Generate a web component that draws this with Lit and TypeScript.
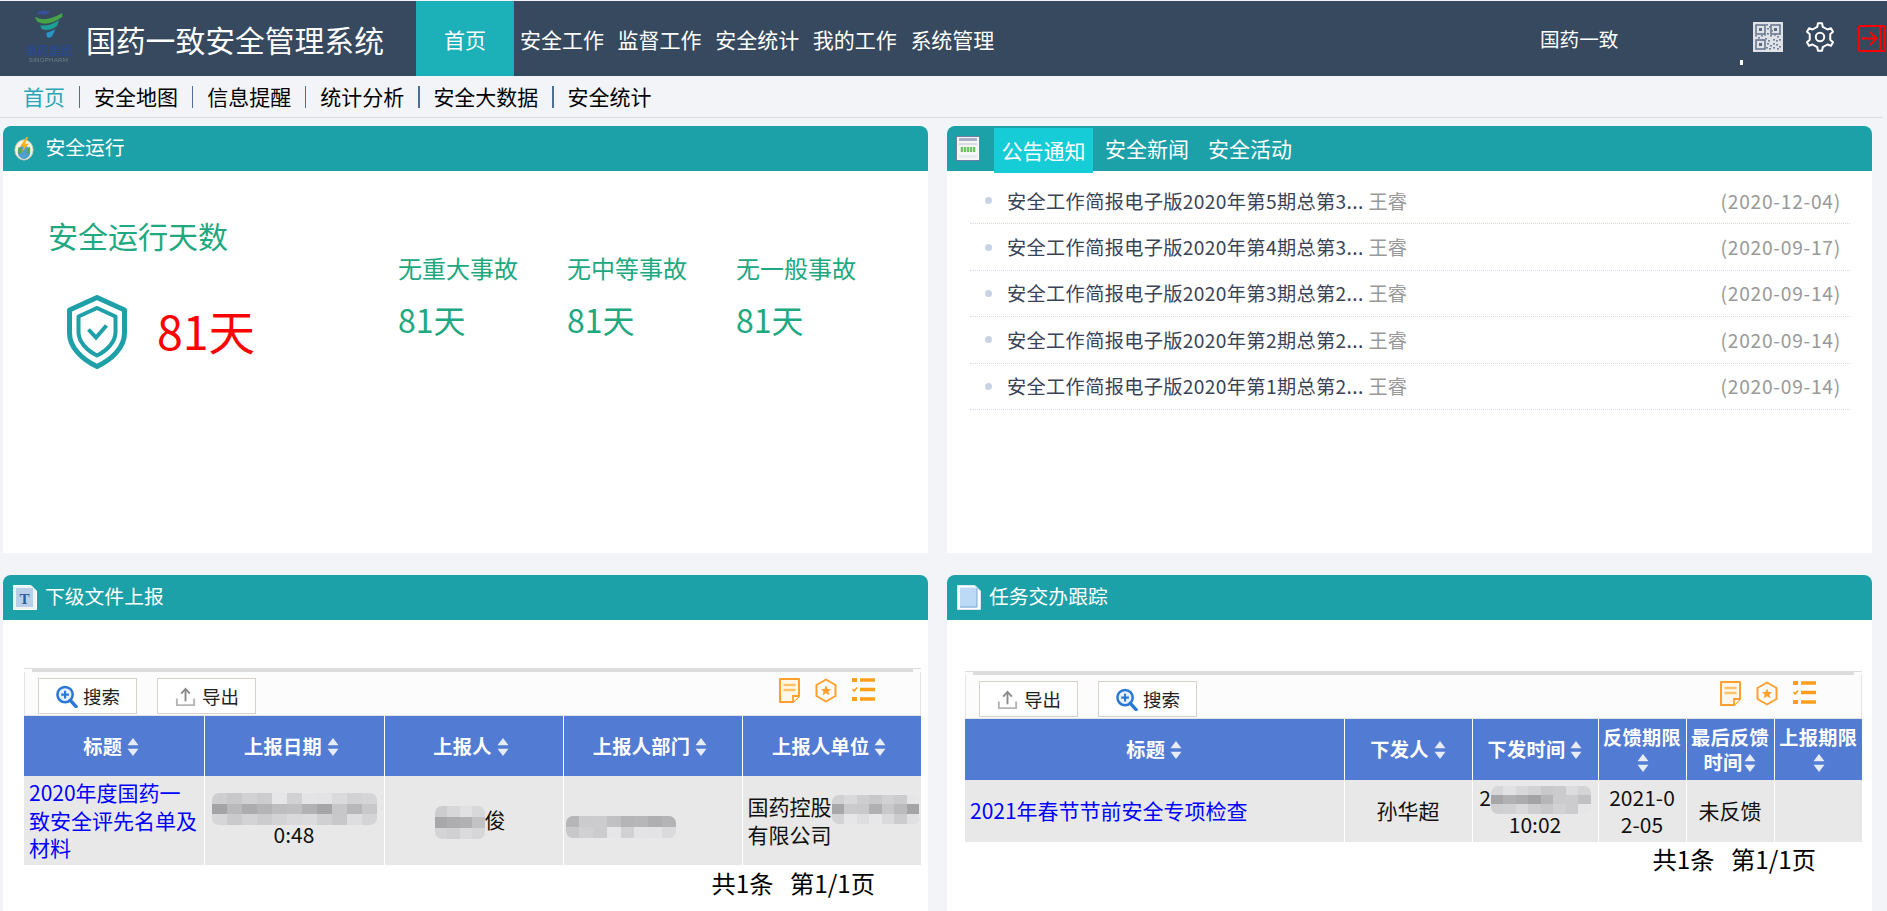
import { LitElement, html, css, svg } from "lit";
import { customElement } from "lit/decorators.js";

function gearPath(cx: number, cy: number, rOut: number, rIn: number, teeth: number) {
  const pts: string[] = [];
  const step = (Math.PI * 2) / teeth;
  for (let i = 0; i < teeth; i++) {
    const a = i * step - Math.PI / 2;
    const w = step * 0.2;
    const seq: [number, number][] = [
      [a - w * 1.25, rIn],
      [a - w * 0.7, rOut],
      [a + w * 0.7, rOut],
      [a + w * 1.25, rIn],
    ];
    for (const [an, r] of seq) {
      pts.push(`${(cx + Math.cos(an) * r).toFixed(2)} ${(cy + Math.sin(an) * r).toFixed(2)}`);
    }
  }
  return "M" + pts.join("L") + "Z";
}

function mosaic(w: number, h: number, cols: number, rows: number, seed: number) {
  const cells = [];
  let s = seed;
  for (let i = 0; i < cols * rows; i++) {
    s = (s * 73 + 41) % 101;
    const midRow = rows === 3 ? Math.floor(i / cols) === 1 : Math.floor(i / cols) === 0;
    const base = midRow ? 158 : 200;
    const v = base + (s % (midRow ? 48 : 32));
    cells.push(html`<i style="background:rgb(${v},${v},${v + 2})"></i>`);
  }
  return html`<span
    class="mosaic"
    style="width:${w}px;height:${h}px;grid-template-columns:repeat(${cols},1fr);grid-template-rows:repeat(${rows},1fr)"
    >${cells}</span
  >`;
}

const arrows = html`<svg class="sort" viewBox="0 0 12 20" width="12" height="20">
  <path d="M6 1 L11.5 8.2 H.5Z M6 19 L.5 11.8 H11.5Z" fill="#e6ecf8" />
</svg>`;

const searchIcon = html`<svg class="bi" viewBox="0 0 24 24" width="23" height="23">
  <circle cx="10.5" cy="10" r="8" fill="#e8f1fb" stroke="#2a78d6" stroke-width="2.6" />
  <path d="M16 16 L22 22.5" stroke="#2a78d6" stroke-width="3.6" stroke-linecap="round" />
  <path d="M6.5 10 H14.5 M10.5 6 V14" stroke="#2a78d6" stroke-width="2.2" />
</svg>`;

const exportIcon = html`<svg class="bi" viewBox="0 0 24 24" width="23" height="23">
  <path d="M3 14 V21 H21 V14" fill="none" stroke="#b5b5b5" stroke-width="2" />
  <path d="M12 17 V5" stroke="#8a8a8a" stroke-width="2" />
  <path d="M7.5 9 L12 4 L16.5 9" fill="none" stroke="#8a8a8a" stroke-width="2" />
</svg>`;

const orangeIcons = html`<div class="oicons">
  <svg viewBox="0 0 21 25" width="21" height="25">
    <path d="M1 1 H20 V18 L14 24 H1 Z" fill="#fff7ea" stroke="#ffa02e" stroke-width="2" stroke-linejoin="round" />
    <path d="M4.5 7 H16.5 M4.5 12 H16.5" stroke="#ffc26b" stroke-width="2.4" />
    <path d="M14 24 V18 H20" fill="#fff" stroke="#ffa02e" stroke-width="1.8" />
  </svg>
  <svg viewBox="0 0 22 25" width="22" height="25">
    <path d="M11 1.5 L20.5 7 V18 L11 23.5 L1.5 18 V7 Z" fill="none" stroke="#ffa02e" stroke-width="2" stroke-linejoin="round" />
    <path d="M11 7.5 L12.6 11 L16.2 11.3 L13.4 13.6 L14.4 17.2 L11 15.2 L7.6 17.2 L8.6 13.6 L5.8 11.3 L9.4 11 Z" fill="#ffa02e" />
  </svg>
  <svg viewBox="0 0 23 24" width="23" height="24">
    <path d="M0 0 H5 V4 H0Z M0 19 H5 V23 H0Z" fill="#ff9f1e" />
    <path d="M0.5 11 L2.2 13 L5 9.5" fill="none" stroke="#ff9f1e" stroke-width="1.6" />
    <path d="M8 2 H23 M8 11.5 H23 M8 21 H23" stroke="#ff9f1e" stroke-width="3.4" />
  </svg>
</div>`;

const iconSafe = html`<svg viewBox="0 0 22 26" width="22" height="25">
  <ellipse cx="11" cy="14.5" rx="9.5" ry="10.5" fill="#f6f4e2" stroke="#c8c8b0" />
  <ellipse cx="11" cy="17" rx="6.5" ry="7" fill="#4f9fd0" />
  <path d="M5 12 Q9 10 8 19 Q4 19 5 12Z M14 19 Q19 17 17 11 Q13 14 14 19Z" fill="#58a84a" />
  <path d="M13.5 1 L7 11 H11 L8.5 17 L16 8 H12 L15.5 1Z" fill="#f6b21a" />
</svg>`;
const iconCal = html`<svg viewBox="0 0 24 25" width="24" height="25">
  <rect x=".5" y=".5" width="23" height="24" fill="#f6f7f4" stroke="#6d7fa6" />
  <rect x="3" y="2" width="18" height="3" fill="#a7b0c6" />
  <rect x="3" y="7" width="18" height="2" fill="#d7dce3" />
  <rect x="4" y="11" width="16" height="5" fill="#d8eccf" />
  <path d="M6 11 V16 M9 11 V16 M12 11 V16 M15 11 V16 M18 11 V16" stroke="#49b23a" stroke-width="1.5" />
  <rect x="3" y="19" width="18" height="3" fill="#e7eaef" />
</svg>`;
const iconDoc = html`<svg viewBox="0 0 24 25" width="24" height="25">
  <path d="M.5 .5 H18 L23.5 6 V24.5 H.5Z" fill="#eef3fa" stroke="#fff" />
  <rect x="3" y="3" width="17" height="19" fill="#b9cfe8" />
  <text x="11.5" y="19" text-anchor="middle" font-size="15" font-weight="700" font-family="Liberation Serif" fill="#2c5e96">T</text>
</svg>`;
const iconBlank = html`<svg viewBox="0 0 24 25" width="24" height="25">
  <path d="M.5 .5 H18 L23.5 6 V24.5 H.5Z" fill="#fff" stroke="#dfe6ee" />
  <rect x="3" y="2.5" width="17" height="20" fill="#bcdaf6" />
  <path d="M20 3 V22 H3" fill="none" stroke="#7fa8d4" />
</svg>`;

const qrNoise: [number, number][] = [
  [13, 2], [16, 4], [14, 6], [18, 8], [2, 13], [5, 15], [8, 13], [11, 12], [14, 11], [17, 13], [21, 12], [24, 14], [26, 11],
  [4, 17], [9, 17], [12, 16], [15, 18], [20, 17], [23, 18], [26, 17], [14, 21], [17, 23], [20, 21], [23, 22], [26, 24], [13, 25], [16, 26], [20, 25], [24, 26],
];

const notices: [string, string][] = [
  ["安全工作简报电子版2020年第5期总第3...", "(2020-12-04)"],
  ["安全工作简报电子版2020年第4期总第3...", "(2020-09-17)"],
  ["安全工作简报电子版2020年第3期总第2...", "(2020-09-14)"],
  ["安全工作简报电子版2020年第2期总第2...", "(2020-09-14)"],
  ["安全工作简报电子版2020年第1期总第2...", "(2020-09-14)"],
];

@customElement("app-root")
export class AppRoot extends LitElement {
  static styles = css`
    :host {
      display: block;
      width: 1887px;
      height: 911px;
      overflow: hidden;
      background: #f2f4f8;
      font-family: "Noto Sans CJK SC", sans-serif;
      color: #000;
      padding-top: 1px;
    }
    * {
      box-sizing: border-box;
    }
    .top {
      height: 75px;
      background: #36495e;
      display: flex;
      align-items: center;
      color: #fff;
      position: relative;
    }
    .logo {
      width: 47px;
      margin-left: 25px;
      display: flex;
      flex-direction: column;
      align-items: center;
      margin-top: -4px;
      opacity: 0.9;
    }
    .logo svg {
      display: block;
      margin-bottom: 5px;
    }
    .logo-cn {
      font-size: 11.5px;
      line-height: 12px;
      color: #2b4a8f;
      font-weight: 700;
      white-space: nowrap;
    }
    .logo-en {
      font-size: 6.2px;
      line-height: 7px;
      color: #75838f;
      letter-spacing: 0.2px;
      white-space: nowrap;
      font-family: "Liberation Sans", sans-serif;
    }
    .brand {
      font-size: 29.8px;
      line-height: 40px;
      margin-left: 14px;
      width: 330px;
      white-space: nowrap;
    }
    .mnav {
      display: flex;
      align-items: center;
      height: 100%;
      font-size: 21px;
    }
    .mnav .act {
      width: 98px;
      height: 100%;
      background: #1cb0b9;
      display: flex;
      align-items: center;
      justify-content: center;
      margin-right: 6px;
    }
    .mnav span {
      margin-right: 13.6px;
      white-space: nowrap;
    }
    .uname {
      font-size: 19.6px;
      position: absolute;
      left: 1540px;
      top: 18px;
      line-height: 40px;
    }
    .tools {
      margin-left: auto;
      display: flex;
      align-items: center;
      height: 100%;
      position: relative;
    }
    .dot {
      position: absolute;
      width: 3px;
      height: 5px;
      background: #fff;
      left: -13px;
      top: 59px;
    }
    .tools svg {
      display: block;
    }
    .qr {
      margin-right: 22px;
      margin-top: -3px;
    }
    .gear {
      margin-right: 23px;
      margin-top: -3px;
    }
    .exit {
      margin-right: 1px;
    }
    .sub {
      height: 42px;
      border-bottom: 1px solid #dcdee4;
      margin-right: 4px;
      padding: 0 0 2px 23px;
      display: flex;
      align-items: center;
      font-size: 21px;
      line-height: 30px;
      white-space: nowrap;
    }
    .sub .on {
      color: #2aa7b5;
    }
    .sub i {
      width: 1.5px;
      height: 22px;
      background: #4d6f96;
      margin: 2px 13.8px 0;
    }
    .grid {
      display: grid;
      grid-template-columns: 925px 925px;
      column-gap: 19px;
      grid-template-rows: 427px 400px;
      row-gap: 22px;
      padding: 8px 0 0 3px;
    }
    .card {
      background: #fff;
      border-radius: 8px 8px 0 0;
    }
    .head {
      height: 45px;
      background: #1ca1a9;
      border-radius: 8px 8px 0 0;
      display: flex;
      align-items: center;
      color: #fff;
      font-size: 19.8px;
      line-height: 26px;
      padding-left: 10px;
    }
    .head svg {
      display: block;
      flex: none;
      margin-right: 8px;
    }
    .head .ttl {
      margin-top: -3px;
    }
    .head .ttl.s {
      margin-left: 2.5px;
    }
    .tabs {
      font-size: 21px;
      white-space: nowrap;
      padding-left: 9px;
    }
    .tabs svg {
      margin-right: 14px;
    }
    .tabs span {
      height: 45px;
      line-height: 44px;
      margin-right: 19px;
    }
    .tabs .act {
      background: #16ccd6;
      padding: 0 7.5px;
      margin: 4px 12px 0 0;
    }
    .run {
      display: flex;
      height: 382px;
    }
    .run-l {
      width: 395px;
      padding: 44px 0 0 45px;
    }
    .run-t {
      font-size: 30px;
      line-height: 40px;
      color: #20a880;
    }
    .run-m {
      display: flex;
      align-items: center;
      margin: 40px 0 0 19px;
    }
    .run-n {
      color: #f00;
      font-size: 46.5px;
      line-height: 60px;
      margin: 0 0 4px 30px;
    }
    .stats {
      display: flex;
      padding-top: 79px;
      gap: 49px;
      color: #20a880;
    }
    .stats b {
      display: block;
      font-weight: 400;
      font-size: 24px;
      line-height: 36px;
    }
    .stats em {
      display: block;
      font-style: normal;
      font-size: 32px;
      line-height: 46px;
      margin-top: 10px;
    }
    .list {
      list-style: none;
      padding: 7px 22px 0 23px;
      margin: 0;
    }
    .list li {
      height: 46.4px;
      border-bottom: 1px dotted #d6d9e6;
      display: flex;
      align-items: center;
      padding: 0 9px 0 15px;
      font-size: 19.2px;
      color: #3a4258;
      white-space: nowrap;
    }
    .list li::before {
      content: "";
      width: 7px;
      height: 7px;
      border-radius: 50%;
      background: #c8d4e6;
      margin-right: 15px;
    }
    .list .t {
      letter-spacing: 0.35px;
    }
    .list .who {
      color: #999;
      margin-left: 5px;
    }
    .list .dt {
      color: #999;
      margin-left: auto;
      letter-spacing: 0.75px;
    }
    .wrap.a {
      padding: 48px 7px 0 21px;
    }
    .wrap.b {
      padding: 51px 10px 0 18px;
    }
    .rule {
      border-top: 1px solid #dedede;
      background: #fcfcfc;
      padding: 0 8px;
    }
    .rule::before {
      content: "";
      display: block;
      height: 3px;
      background: #dcdcdc;
    }
    .bar {
      height: 44px;
      background: #fcfcfc;
      border: 1px solid #e4e4e4;
      border-width: 0 1px 1px;
      display: flex;
      align-items: flex-start;
      padding: 6px 45px 0 13px;
      gap: 20px;
    }
    .btn {
      width: 99px;
      height: 36px;
      border: 1px solid #d8d3ca;
      background: #fff;
      display: flex;
      align-items: center;
      justify-content: center;
      gap: 5px;
      font-size: 18.5px;
      color: #222;
      white-space: nowrap;
    }
    .bi {
      display: block;
    }
    .oicons {
      margin-left: auto;
      display: flex;
      gap: 15px;
    }
    .oicons svg {
      display: block;
    }
    table {
      border-collapse: collapse;
      table-layout: fixed;
      width: 100%;
    }
    th {
      background: #527bd3;
      color: #fff;
      font-size: 19.2px;
      font-weight: 700;
      letter-spacing: 0.3px;
      line-height: 25px;
      padding: 0 4px;
      border-left: 1px solid #fff;
      text-align: center;
    }
    th:first-child,
    td:first-child {
      border-left: 0;
    }
    td {
      background: #e8e8e8;
      font-size: 21px;
      line-height: 27.5px;
      padding: 0 5px;
      border-left: 1px solid #fff;
      text-align: center;
      color: #111;
    }
    td.l {
      text-align: left;
    }
    td.tight {
      padding: 0 2px;
    }
    td.tight .mosaic {
      margin-top: 4px;
    }
    td.pr {
      padding-right: 12px;
    }
    td a {
      color: #00f;
      text-decoration: none;
    }
    .sort {
      display: inline-block;
      vertical-align: -3px;
      margin-left: 5px;
    }
    .ta th {
      height: 60px;
      padding: 0 9px 0 4px;
    }
    .ta td {
      height: 89px;
    }
    .tb th {
      height: 61px;
    }
    .tb td {
      height: 62px;
    }
    .tb th.n {
      padding: 0 2px;
    }
    .tb th.n .sort {
      margin-left: 2px;
    }
    .a1 {
      width: 180px;
    }
    .a2 {
      width: 180px;
    }
    .a3 {
      width: 179px;
    }
    .c-c {
      width: 128px;
    }
    .c-d {
      width: 126px;
    }
    .c-e {
      width: 88px;
    }
    .pg {
      font-size: 24.3px;
      line-height: 36px;
      text-align: right;
      white-space: nowrap;
      color: #000;
    }
    .wrap.a .pg {
      padding: 0 46px 0 0;
    }
    .wrap.b .pg {
      margin-top: -1px;
      padding: 0 46px 0 0;
    }
    .mosaic {
      display: inline-grid;
      vertical-align: middle;
      margin: -4px 0;
      border-radius: 7px;
      overflow: hidden;
      filter: blur(0.7px);
    }
    .mosaic i {
      display: block;
    }
    .over {
      white-space: nowrap;
    }
  `;

  render() {
    return html`
      <div class="top">
        <div class="logo">
          <svg viewBox="0 0 48 38" width="37" height="29">
            <path d="M8 5 Q10 1 18 1 Q26 0 25 5 Q16 7 8 5Z" fill="#3b50a0" />
            <path d="M6 9 Q20 17 42 4 L42 9 Q24 23 9 15Z" fill="#49ad45" />
            <path d="M13 20 Q25 22 38 13 L35 21 Q25 29 15 25Z" fill="#1ba99b" />
            <path d="M21 30 Q29 28 33 25 L29 34 Q25 38 22 35Z" fill="#2b9ed4" />
          </svg>
          <span class="logo-cn">国药集团</span>
          <span class="logo-en">SINOPHARM</span>
        </div>
        <div class="brand">国药一致安全管理系统</div>
        <div class="mnav">
          <div class="act">首页</div>
          <span>安全工作</span><span>监督工作</span><span>安全统计</span><span>我的工作</span><span>系统管理</span>
        </div>
        <div class="uname">国药一致</div>
        <div class="tools">
          <span class="dot"></span>
          <svg class="qr" viewBox="0 0 30 30" width="30" height="30">
            <rect width="30" height="30" fill="#dfe3e8" />
            <path d="M3 3 H12 V12 H3Z M18 3 H27 V12 H18Z M3 18 H12 V27 H3Z" fill="none" stroke="#62718a" stroke-width="1.5" />
            <path d="M6 6 H9 V9 H6Z M21 6 H24 V9 H21Z M6 21 H9 V24 H6Z" fill="#5c6a80" />
            ${qrNoise.map(([x, y]) => svg`<rect x=${x} y=${y} width="2" height="1.6" fill="#76849a" />`)}
          </svg>
          <svg class="gear" viewBox="0 0 30 30" width="30" height="30">
            <path d=${gearPath(15, 15, 14, 10.6, 6)} fill="none" stroke="#fff" stroke-width="2" stroke-linejoin="round" />
            <circle cx="15" cy="15" r="4.2" fill="none" stroke="#fff" stroke-width="2" />
          </svg>
          <svg class="exit" viewBox="0 0 28 27" width="28" height="27">
            <rect x="1" y="1" width="26" height="25" rx="1.5" fill="none" stroke="#f00" stroke-width="2" />
            <path d="M22 1 V26" stroke="#f00" stroke-width="2" />
            <path d="M4 13.5 H18 M12 7 L18.5 13.5 L12 20" fill="none" stroke="#f00" stroke-width="2" />
          </svg>
        </div>
      </div>
      <div class="sub">
        <span class="on">首页</span><i></i><span>安全地图</span><i></i><span>信息提醒</span><i></i><span>统计分析</span><i></i><span>安全大数据</span><i></i><span>安全统计</span>
      </div>
      <div class="grid">
        <section class="card">
          <div class="head">${iconSafe}<span class="ttl s">安全运行</span></div>
          <div class="run">
            <div class="run-l">
              <div class="run-t">安全运行天数</div>
              <div class="run-m">
                <svg viewBox="0 0 60 74" width="60" height="74">
                  <path d="M30 2.5 L57.5 15 V38 C57.5 53 44 65 30 71.5 C16 65 2.5 53 2.5 38 V15 Z" fill="none" stroke="#1ea0a8" stroke-width="5" stroke-linejoin="round" />
                  <path d="M30 13 L48.5 21.5 V37 C48.5 47 40 55.5 30 60.5 C20 55.5 11.5 47 11.5 37 V21.5 Z" fill="none" stroke="#1ea0a8" stroke-width="4" stroke-linejoin="round" />
                  <path d="M21.5 34.5 L29 42.5 L39.5 30.5" fill="none" stroke="#1ea0a8" stroke-width="4" />
                </svg>
                <span class="run-n">81天</span>
              </div>
            </div>
            <div class="stats">
              <div><b>无重大事故</b><em>81天</em></div>
              <div><b>无中等事故</b><em>81天</em></div>
              <div><b>无一般事故</b><em>81天</em></div>
            </div>
          </div>
        </section>
        <section class="card">
          <div class="head tabs">
            ${iconCal}
            <span class="act">公告通知</span><span>安全新闻</span><span>安全活动</span>
          </div>
          <ul class="list">
            ${notices.map(
              ([t, d]) => html`<li><span class="t">${t}</span><span class="who">王睿</span><span class="dt">${d}</span></li>`
            )}
          </ul>
        </section>
        <section class="card">
          <div class="head">${iconDoc}<span class="ttl">下级文件上报</span></div>
          <div class="wrap a">
            <div class="rule"></div>
            <div class="bar">
              <div class="btn">${searchIcon}搜索</div>
              <div class="btn">${exportIcon}导出</div>
              ${orangeIcons}
            </div>
            <table class="ta">
              <colgroup>
                <col class="a1" />
                <col class="a2" />
                <col class="a3" />
                <col class="a3" />
                <col />
              </colgroup>
              <thead>
                <tr>
                  <th>标题${arrows}</th>
                  <th>上报日期${arrows}</th>
                  <th>上报人${arrows}</th>
                  <th>上报人部门${arrows}</th>
                  <th>上报人单位${arrows}</th>
                </tr>
              </thead>
              <tbody>
                <tr>
                  <td class="l"><a>2020年度国药一<br />致安全评先名单及<br />材料</a></td>
                  <td>${mosaic(165, 32, 11, 3, 17)}<br />0:48</td>
                  <td class="pr"><span class="over">${mosaic(50, 33, 4, 3, 29)}俊</span></td>
                  <td class="l tight">${mosaic(110, 22, 8, 2, 53)}</td>
                  <td class="l"><span class="over">国药控股${mosaic(88, 29, 7, 3, 71)}</span><br />有限公司</td>
                </tr>
              </tbody>
            </table>
            <div class="pg">共1条&nbsp;&nbsp;&nbsp;第1/1页</div>
          </div>
        </section>
        <section class="card">
          <div class="head">${iconBlank}<span class="ttl">任务交办跟踪</span></div>
          <div class="wrap b">
            <div class="rule"></div>
            <div class="bar">
              <div class="btn">${exportIcon}导出</div>
              <div class="btn">${searchIcon}搜索</div>
              ${orangeIcons}
            </div>
            <table class="tb">
              <colgroup>
                <col />
                <col class="c-c" />
                <col class="c-d" />
                <col class="c-e" />
                <col class="c-e" />
                <col class="c-e" />
              </colgroup>
              <thead>
                <tr>
                  <th>标题${arrows}</th>
                  <th>下发人${arrows}</th>
                  <th>下发时间${arrows}</th>
                  <th class="n">反馈期限<br />${arrows}</th>
                  <th class="n">最后反馈<br />时间${arrows}</th>
                  <th class="n">上报期限<br />${arrows}</th>
                </tr>
              </thead>
              <tbody>
                <tr>
                  <td class="l"><a>2021年春节节前安全专项检查</a></td>
                  <td>孙华超</td>
                  <td><span class="over">2${mosaic(100, 28, 8, 3, 37)}</span><br />10:02</td>
                  <td>2021-0<br />2-05</td>
                  <td>未反馈</td>
                  <td></td>
                </tr>
              </tbody>
            </table>
            <div class="pg">共1条&nbsp;&nbsp;&nbsp;第1/1页</div>
          </div>
        </section>
      </div>
    `;
  }
}
